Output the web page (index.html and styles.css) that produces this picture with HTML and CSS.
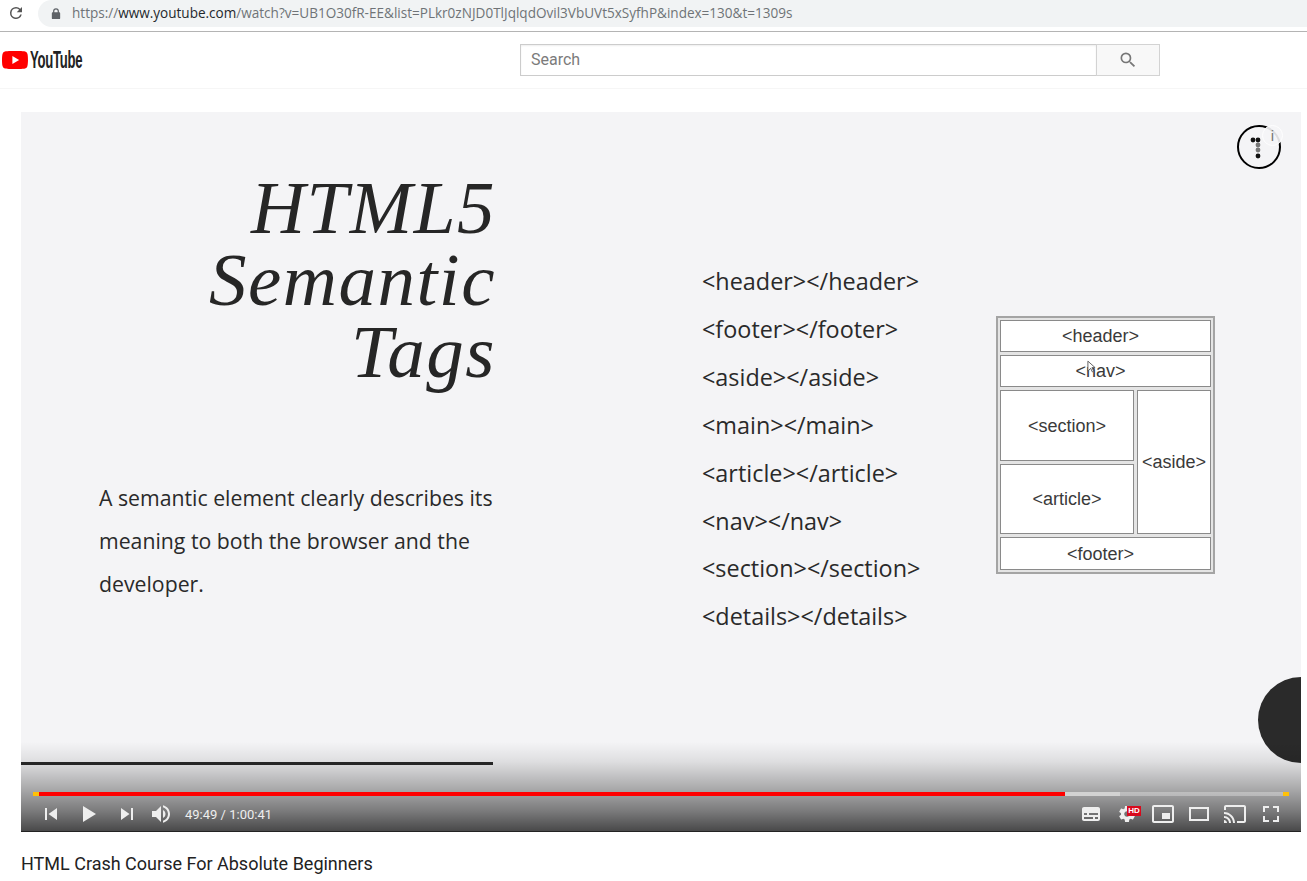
FILE: index.html
```html
<!DOCTYPE html>
<html lang="en">
<head>
<meta charset="utf-8">
<title>HTML Crash Course For Absolute Beginners</title>
<link rel="stylesheet" href="styles.css">
</head>
<body>
<div class="browser-bar">
  <svg class="reload" viewBox="0 0 24 24" width="18" height="18"><path d="M17.65 6.35A7.96 7.96 0 0 0 12 4a8 8 0 1 0 7.73 10h-2.08A6 6 0 1 1 12 6c1.66 0 3.14.69 4.22 1.78L13 11h7V4l-2.35 2.35z"/></svg>
  <div class="omnibox">
    <svg class="lock" viewBox="0 0 12 14" width="10" height="12"><path d="M10 5H9.5V3.5a3.5 3.5 0 0 0-7 0V5H2a1 1 0 0 0-1 1v6a1 1 0 0 0 1 1h8a1 1 0 0 0 1-1V6a1 1 0 0 0-1-1zM4 5V3.500a2 2 0 0 1 4 0V5H4z"/></svg>
    <span class="url"><span class="url-faint">https://</span><span class="url-host">www.youtube.com</span><span class="url-faint">/watch?v=UB1O30fR-EE&amp;list=PLkr0zNJD0TlJqlqdOvil3VbUVt5xSyfhP&amp;index=130&amp;t=1309s</span></span>
  </div>
</div>

<header class="masthead">
  <div class="logo">
    <svg viewBox="0 0 26 18" width="26" height="18"><path fill="#f00" d="M25.4 2.800A3.300 3.300 0 0 0 23.100.5C21.100 0 13 0 13 0S4.900 0 2.900.5A3.300 3.300 0 0 0 .6 2.800C0 4.800 0 9 0 9s0 4.200.6 6.200a3.300 3.300 0 0 0 2.300 2.300C4.900 18 13 18 13 18s8.100 0 10.100-.5a3.300 3.300 0 0 0 2.300-2.300C26 13.200 26 9 26 9s0-4.200-.6-6.200z"/><path fill="#fff" d="M10.400 12.900 17.100 9l-6.700-3.900z"/></svg>
    <span class="logo-word">YouTube</span>
  </div>
  <div class="search">
    <div class="search-input">Search</div>
    <div class="search-btn">
      <svg viewBox="0 0 24 24" width="20" height="20"><path fill="#777" d="M15.500 14h-.79l-.28-.27A6.470 6.470 0 0 0 16 9.500 6.500 6.500 0 1 0 9.500 16c1.610 0 3.090-.59 4.230-1.570l.27.28v.79l5 4.990L20.490 19l-4.990-5zm-6 0C7.010 14 5 11.990 5 9.500S7.010 5 9.500 5 14 7.010 14 9.500 11.990 14 9.500 14z"/></svg>
    </div>
  </div>
</header>

<main class="content">
  <section class="player">
    <div class="slide">
      <div class="slide-left">
        <h1 class="slide-title">HTML5<br>Semantic<br>Tags</h1>
        <p class="slide-text">A semantic element clearly describes its<br>meaning to both the browser and the<br>developer.</p>
        <div class="slide-rule"></div>
      </div>
      <ul class="tag-list">
        <li>&lt;header&gt;&lt;/header&gt;</li>
        <li>&lt;footer&gt;&lt;/footer&gt;</li>
        <li>&lt;aside&gt;&lt;/aside&gt;</li>
        <li>&lt;main&gt;&lt;/main&gt;</li>
        <li>&lt;article&gt;&lt;/article&gt;</li>
        <li>&lt;nav&gt;&lt;/nav&gt;</li>
        <li>&lt;section&gt;&lt;/section&gt;</li>
        <li>&lt;details&gt;&lt;/details&gt;</li>
      </ul>
      <div class="diagram">
        <div class="cell cell-wide">&lt;header&gt;</div>
        <div class="cell cell-wide cell-nav">&lt;nav&gt;
          <svg class="cursor" viewBox="0 0 10 15" width="9" height="14"><path fill="#fff" stroke="#555" stroke-width="1" d="M1 1v11l3-3 2 4 1.500-.8-2-4H9z"/></svg>
        </div>
        <div class="cell">&lt;section&gt;</div>
        <div class="cell cell-aside">&lt;aside&gt;</div>
        <div class="cell">&lt;article&gt;</div>
        <div class="cell cell-wide">&lt;footer&gt;</div>
      </div>
    </div>

    <div class="blob"></div>

    <div class="channel-mark">
      <svg viewBox="0 0 46 46" width="46" height="46">
        <circle cx="23" cy="23" r="21" fill="none" stroke="#000" stroke-width="2"/>
        <circle cx="17" cy="16" r="2.400" fill="#111"/><circle cx="22" cy="16" r="2.400" fill="#111"/>
        <circle cx="22" cy="21" r="2.400" fill="#777"/><circle cx="22" cy="26" r="2.400" fill="#777"/>
        <circle cx="22" cy="32" r="2.400" fill="#111"/>
      </svg>
      <div class="info-badge">i</div>
    </div>

    <div class="chrome">
      <div class="progress">
        <span class="seg seg-ad"></span>
        <span class="seg seg-played"></span>
        <span class="seg seg-buffer"></span>
        <span class="seg seg-rest"></span>
        <span class="seg seg-ad"></span>
      </div>
      <div class="controls">
        <div class="controls-left">
          <svg class="ctl" viewBox="0 0 36 36"><path d="M12 12h2v12h-2zm3.500 6 8.500 6V12z"/></svg>
          <svg class="ctl" viewBox="0 0 36 36"><path d="M12 26l6.500-4v-8L12 10zm6.500-4L25 18l-6.500-4z"/></svg>
          <svg class="ctl" viewBox="0 0 36 36"><path d="M12 24l8.500-6L12 12zM22 12v12h2V12z"/></svg>
          <svg class="ctl ctl-vol" viewBox="0 0 36 36"><path d="M8 21h4l5 5V10l-5 5H8zM19 14v8c1.480-.68 2.500-2.230 2.500-4 0-1.740-1.020-3.260-2.500-4zM19 11.290c2.890.86 5 3.540 5 6.710s-2.110 5.850-5 6.710v2.060c4.010-.91 7-4.490 7-8.770s-2.990-7.860-7-8.770z"/></svg>
          <span class="time">49:49 / 1:00:41</span>
        </div>
        <div class="controls-right">
          <svg class="ctl-r" viewBox="0 0 36 36"><path fill-rule="evenodd" d="M11 11c-1.100 0-2 .9-2 2v10c0 1.100.9 2 2 2h14c1.100 0 2-.9 2-2V13c0-1.100-.9-2-2-2zm0 6h3v2h-3zm9 6h-9v-2h9zm5 0h-3v-2h3zm0-4h-9v-2h9z"/></svg>
          <div class="settings">
            <svg class="ctl-r" viewBox="0 0 36 36"><path d="m23.940 18.780c.03-.25.05-.51.05-.78s-.02-.52-.05-.78l1.680-1.320c.15-.12.19-.33.09-.51l-1.600-2.760c-.09-.17-.31-.24-.48-.17l-1.990.8c-.41-.32-.86-.58-1.350-.78l-.3-2.120c-.02-.19-.19-.33-.39-.33h-3.200c-.2 0-.36.14-.39.33l-.3 2.120c-.48.2-.93.47-1.350.78l-1.990-.8c-.18-.07-.39 0-.48.17l-1.600 2.760c-.1.17-.05.39.09.51l1.680 1.320c-.03.25-.05.52-.05.78s.02.52.05.78l-1.680 1.320c-.15.12-.19.33-.09.51l1.600 2.760c.09.17.31.24.48.17l1.990-.8c.41.32.86.58 1.350.78l.3 2.120c.02.19.19.33.39.33h3.200c.2 0 .36-.14.39-.33l.3-2.120c.48-.2.93-.47 1.350-.78l1.990.8c.18.07.39 0 .48-.17l1.600-2.760c.09-.17.05-.39-.09-.51zm-5.940 2.010c-1.540 0-2.800-1.250-2.800-2.800s1.250-2.800 2.800-2.800 2.800 1.250 2.800 2.800-1.250 2.800-2.800 2.800z"/></svg>
            <span class="hd">HD</span>
          </div>
          <svg class="ctl-r" viewBox="0 0 36 36"><path fill-rule="evenodd" d="M25 17h-8v6h8zm4 8V10.980C29 9.880 28.100 9 27 9H9c-1.100 0-2 .88-2 1.980V25c0 1.100.9 2 2 2h18c1.100 0 2-.9 2-2zm-2 .02H9V10.970h18z"/></svg>
          <svg class="ctl-r" viewBox="0 0 36 36"><path fill-rule="evenodd" d="M28 11v14H8V11zM10 13v10h16V13z"/></svg>
          <svg class="ctl-r" viewBox="0 0 36 36"><path d="M27 9H9c-1.100 0-2 .9-2 2v3h2v-3h18v14h-7v2h7c1.100 0 2-.9 2-2V11c0-1.100-.9-2-2-2zM7 24v3h3c0-1.660-1.340-3-3-3zm0-4v2c2.760 0 5 2.240 5 5h2c0-3.870-3.130-7-7-7zm0-4v2c4.970 0 9 4.030 9 9h2c0-6.080-4.930-11-11-11z"/></svg>
          <svg class="ctl-r" viewBox="0 0 36 36"><path d="M10 16h2v-4h4v-2h-6zM20 10v2h4v4h2v-6zM24 24h-4v2h6v-6h-2zM12 20h-2v6h6v-2h-4z"/></svg>
        </div>
      </div>
    </div>
  </section>
  <h2 class="video-title">HTML Crash Course For Absolute Beginners</h2>
</main>
</body>
</html>
```
FILE: styles.css
```css
* { box-sizing: border-box; }
html, body { margin: 0; padding: 0; background: #fff; }
body { width: 1307px; height: 881px; overflow: hidden; font-family: Roboto, "Liberation Sans", sans-serif; }

.browser-bar { height: 32px; display: flex; align-items: flex-start; border-bottom: 1px solid #b4b4b4; background: #fff; padding-left: 7px; }
.reload { fill: #555; margin-top: 4px; }
.omnibox { margin-left: 13px; flex: 1; height: 27px; background: #f1f3f4; border-radius: 14px 0 0 14px; display: flex; align-items: center; padding-left: 13px; }
.lock { fill: #5f6368; }
.url { margin-left: 11px; padding-bottom: 2px; font: 13.550px "Open Sans", sans-serif; white-space: nowrap; }
.url-faint { color: #6f7377; }
.url-host { color: #24282c; }

.masthead { height: 57px; display: flex; align-items: center; border-bottom: 1px solid #f6f6f6; }
.logo { display: flex; align-items: center; padding-left: 2px; width: 520px; flex: none; }
.logo-word { display: inline-block; font: bold 23px "Liberation Sans", sans-serif; color: #222; margin-left: 2px; letter-spacing: -.5px; transform: scaleX(.57); transform-origin: left center; }
.search { display: flex; height: 32px; margin-top: -1px; }
.search-input { width: 576px; border: 1px solid #ccc; border-right: 0; padding-left: 10px; font-size: 16px; line-height: 30px; color: #7b7b7b; box-shadow: inset 0 1px 2px #eee; }
.search-btn { width: 64px; border: 1px solid #d3d3d3; background: #f8f8f8; display: flex; align-items: center; justify-content: center; }

.content { padding: 23px 0 0 21px; }
.player { position: relative; width: 1280px; height: 720px; overflow: hidden; background: #f4f4f6; }

.slide { display: flex; height: 100%; color: #2a2a2a; }
.slide-left { width: 472px; flex: none; padding-top: 60px; }
.slide-title { margin: 0 -3px 0 0; font: italic 400 75px/72px "Liberation Serif", serif; letter-spacing: 1.500px; text-align: right; color: #262626; }
.slide-text { margin: 88px 0 0; padding-left: 78px; font: 21.250px/43px "Open Sans", sans-serif; white-space: nowrap; color: #2a2a2a; }
.slide-rule { margin-top: 157px; height: 3px; background: #2a2a2a; }

.tag-list { list-style: none; margin: 146px 0 0 209px; padding: 0; width: 294px; flex: none; font: 23.400px/47.900px "Open Sans", sans-serif; color: #2a2a2a; white-space: nowrap; }

.diagram { margin-top: 204px; width: 219px; height: 258px; flex: none; display: grid; grid-template-columns: 134px 74px; grid-template-rows: 32px 32px 71px 70px 33px; gap: 3px; padding: 2px 2px; border: 2px solid #a4a4a4; background: #e4e4e4; }
.cell { background: #fff; border: 1px solid #8a8a8a; display: flex; align-items: center; justify-content: center; padding-top: 1px; font: 18px "Liberation Sans", sans-serif; color: #3a3a3a; position: relative; }
.cell-wide { grid-column: 1 / 3; padding-right: 10px; }
.cell-aside { grid-column: 2; grid-row: 3 / 5; }
.cursor { position: absolute; left: 86px; top: 4px; }

.blob { position: absolute; left: 1237px; top: 565px; width: 86px; height: 86px; border-radius: 50%; background: #2a2a2a; }

.channel-mark { position: absolute; left: 1215px; top: 12px; width: 46px; height: 46px; }
.info-badge { position: absolute; left: 26px; top: 1px; width: 21px; height: 21px; border-radius: 50%; border: 1px solid #fff; background: rgba(245,245,247,.9); color: #777; font: 15px/19px "Liberation Sans", sans-serif; text-align: center; }

.chrome { position: absolute; left: 0; right: 0; bottom: 0; height: 90px; display: flex; flex-direction: column; justify-content: flex-end; background: linear-gradient(to bottom, rgba(0,0,0,0) 0%, rgba(0,0,0,.09) 22%, rgba(0,0,0,.3) 52%, rgba(0,0,0,.5) 78%, rgba(0,0,0,.7) 100%); border-bottom: 1px solid #222; }
.progress { display: flex; height: 4px; margin: 0 12px; }
.seg { display: block; height: 100%; }
.seg-ad { width: 6px; background: #ffc107; }
.seg-played { width: 1026px; background: #f00; }
.seg-buffer { width: 55px; background: #d2d2d2; }
.seg-rest { flex: 1; background: rgba(255,255,255,.3); }
.controls { height: 36px; margin-bottom: -1px; display: flex; justify-content: space-between; padding: 0 12px 0 11px; }
.controls-left { display: flex; align-items: center; }
.ctl { width: 38px; height: 36px; fill: #eee; flex: none; }
.ctl-vol { width: 36px; margin-left: -2px; }
.time { font-size: 13px; color: #eee; margin-left: 5px; }
.controls-right { display: flex; }
.ctl-r { width: 36px; height: 36px; fill: #eee; flex: none; display: block; }
.settings { position: relative; width: 36px; height: 36px; }
.hd { position: absolute; left: 18px; top: 10px; width: 14px; height: 10px; background: #d8091c; color: #fff; font: bold 8px/10px "Liberation Sans", sans-serif; text-align: center; }

.video-title { margin: 21px 0 0; font: 400 18px/22px Roboto, sans-serif; color: #222; }
```
